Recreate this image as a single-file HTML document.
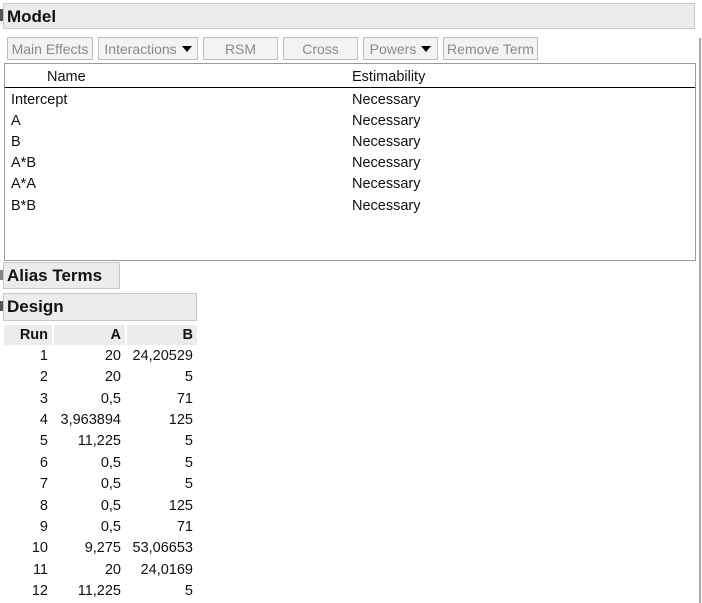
<!DOCTYPE html>
<html><head><style>
body{margin:0;width:702px;height:603px;background:#fff;font-family:"Liberation Sans",sans-serif;position:relative;overflow:hidden;color:#111}
.a{position:absolute}
.hdr{background:#ececec;border:1px solid #c8c8c8;font-weight:bold;font-size:17px;box-sizing:border-box;padding-left:3px;line-height:25px}
.btn{position:absolute;top:37px;height:23px;box-sizing:border-box;border:1px solid #bdbdbd;background:#f3f3f3;color:#8a8a8a;font-size:14px;line-height:22px;text-align:center;white-space:nowrap}
.tri{display:inline-block;width:0;height:0;border-left:5px solid transparent;border-right:5px solid transparent;border-top:6px solid #000;margin-left:5px;vertical-align:2px}
.t{position:absolute;font-size:14.5px;white-space:nowrap}
.th{position:absolute;top:325px;height:20px;background:#ececec;font-weight:bold;font-size:14.5px;line-height:21px;text-align:right;box-sizing:border-box;padding-right:4px}
.r{position:absolute;font-size:14.5px;text-align:right}
</style></head><body>
<div class="a" style="left:0;top:9px;width:3px;height:12px;background:#555"></div>
<div class="a hdr" style="left:3px;top:3px;width:692px;height:26px">Model</div>
<div class="a" style="left:699px;top:38px;width:2px;height:565px;background:#a8a8a8"></div>
<div class="btn" style="left:7px;width:86px">Main Effects</div>
<div class="btn" style="left:98px;width:100px">Interactions<span class="tri"></span></div>
<div class="btn" style="left:203px;width:75px">RSM</div>
<div class="btn" style="left:283px;width:75px">Cross</div>
<div class="btn" style="left:363px;width:75px">Powers<span class="tri"></span></div>
<div class="btn" style="left:443px;width:95px">Remove Term</div>
<div class="a" style="left:4px;top:63px;width:692px;height:198px;border:1px solid #9a9a9a;box-sizing:border-box"></div>
<div class="a" style="left:5px;top:87px;width:690px;height:1px;background:#000"></div>
<div class="t" style="left:47px;top:69px">Name</div>
<div class="t" style="left:352px;top:69px">Estimability</div>
<div class="t" style="left:11px;top:92px">Intercept</div><div class="t" style="left:352px;top:92px">Necessary</div>
<div class="t" style="left:11px;top:113px">A</div><div class="t" style="left:352px;top:113px">Necessary</div>
<div class="t" style="left:11px;top:134px">B</div><div class="t" style="left:352px;top:134px">Necessary</div>
<div class="t" style="left:11px;top:155px">A*B</div><div class="t" style="left:352px;top:155px">Necessary</div>
<div class="t" style="left:11px;top:176px">A*A</div><div class="t" style="left:352px;top:176px">Necessary</div>
<div class="t" style="left:11px;top:198px">B*B</div><div class="t" style="left:352px;top:198px">Necessary</div>
<div class="a" style="left:0;top:270px;width:3px;height:10px;background:#888"></div>
<div class="a hdr" style="left:3px;top:262px;width:117px;height:27px">Alias Terms</div>
<div class="a" style="left:0;top:301px;width:3px;height:10px;background:#555"></div>
<div class="a hdr" style="left:3px;top:293px;width:194px;height:28px">Design</div>
<div class="th" style="left:4px;width:48px">Run</div>
<div class="th" style="left:54px;width:71px">A</div>
<div class="th" style="left:127px;width:70px">B</div>
<div id="rows"></div>
<script>
var d=[["1","20","24,20529"],["2","20","5"],["3","0,5","71"],["4","3,963894","125"],["5","11,225","5"],["6","0,5","5"],["7","0,5","5"],["8","0,5","125"],["9","0,5","71"],["10","9,275","53,06653"],["11","20","24,0169"],["12","11,225","5"]];
var h="";d.forEach(function(r,i){var y=348+i*21.36;
h+='<div class="r" style="left:4px;width:44px;top:'+y+'px">'+r[0]+'</div><div class="r" style="left:54px;width:67px;top:'+y+'px">'+r[1]+'</div><div class="r" style="left:127px;width:66px;top:'+y+'px">'+r[2]+'</div>';});
document.getElementById("rows").innerHTML=h;
</script>
</body></html>
